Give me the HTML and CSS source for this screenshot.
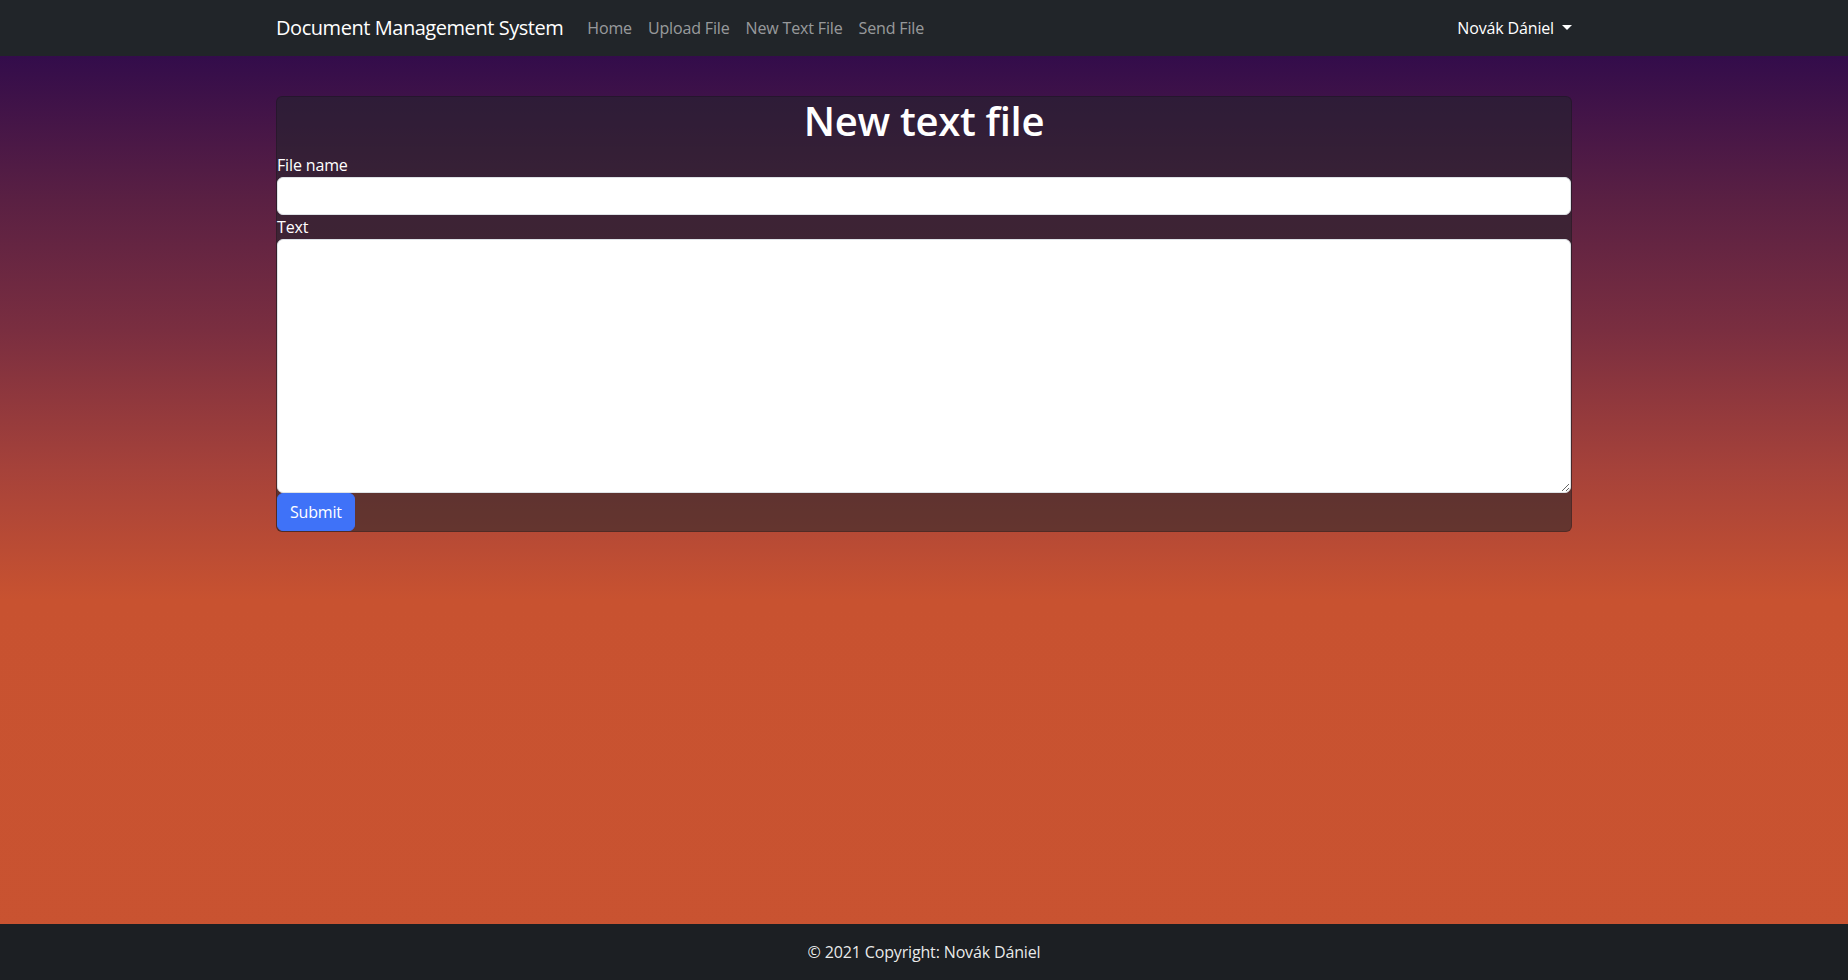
FILE: index.html
```html
<!DOCTYPE html>
<html lang="en">
<head>
<meta charset="utf-8">
<title>New text file - Document Management System</title>
<link rel="stylesheet" href="styles.css">
</head>
<body>
<nav class="navbar">
  <div class="container nav-inner">
    <a class="brand" href="#">Document Management System</a>
    <ul class="nav-links">
      <li><a class="nav-link" href="#">Home</a></li>
      <li><a class="nav-link" href="#">Upload File</a></li>
      <li><a class="nav-link" href="#">New Text File</a></li>
      <li><a class="nav-link" href="#">Send File</a></li>
    </ul>
    <a class="user-link" href="#">Novák Dániel<span class="caret"></span></a>
  </div>
</nav>
<main class="main">
  <div class="container">
    <form class="card">
      <h1 class="title">New text file</h1>
      <label class="label" for="fname">File name</label>
      <input class="control" id="fname" type="text">
      <label class="label" for="ftext">Text</label>
      <textarea class="control area" id="ftext" rows="10"></textarea>
      <div class="actions"><button class="btn" type="button">Submit</button></div>
    </form>
  </div>
</main>
<footer class="footer">© 2021 Copyright: Novák Dániel</footer>
</body>
</html>
```
FILE: styles.css
```css
* { box-sizing: border-box; }
html, body { height: 100%; }
body {
  margin: 0;
  min-height: 100vh;
  display: flex;
  flex-direction: column;
  font-family: "Open Sans", "Noto Sans", sans-serif;
  font-size: 16px;
  line-height: 1.5;
  letter-spacing: -0.15px;
  color: #fff;
  background: #c95331 linear-gradient(180deg, #330c4b 56px, #5a2043 200px, #7a2e40 330px, #a6423a 470px, #c85230 600px, #c95331 100%) no-repeat;
}
.container {
  width: 1296px;
  margin: 0 auto;
}
.navbar {
  background: #212529;
  height: 56px;
  flex: none;
}
.nav-inner {
  display: flex;
  align-items: center;
  height: 56px;
}
.brand {
  font-size: 20px;
  line-height: 30px;
  letter-spacing: -0.45px;
  color: #fff;
  text-decoration: none;
  margin-right: 16px;
}
.nav-links {
  list-style: none;
  margin: 0;
  padding: 0;
  display: flex;
  flex: 1;
}
.nav-link {
  display: block;
  padding: 8px 8px;
  color: rgba(255,255,255,.55);
  text-decoration: none;
}
.user-link {
  color: #fff;
  text-decoration: none;
  padding: 8px 0;
}
.caret {
  display: inline-block;
  margin-left: 8px;
  vertical-align: 4px;
  border-top: 5px solid #fff;
  border-left: 5px solid transparent;
  border-right: 5px solid transparent;
}
.main {
  flex: 1;
  padding-top: 40px;
}
.card {
  display: flex;
  flex-direction: column;
  background: rgba(33,37,41,.55);
  border: 1px solid rgba(0,0,0,.18);
  border-radius: 6px;
}
.title {
  margin: 0 0 8px;
  font-size: 40px;
  font-weight: 600;
  line-height: 48px;
  letter-spacing: -0.3px;
  text-align: center;
}
.label {
  display: block;
  line-height: 24px;
}
.control {
  display: block;
  width: 100%;
  height: 38px;
  padding: 6px 12px;
  font: inherit;
  color: #212529;
  background: #fff;
  border: 1px solid #dee2e6;
  border-radius: 6px;
}
.area {
  height: 254px;
  resize: vertical;
}
.actions { display: flex; }
.btn {
  height: 38px;
  padding: 6px 12px;
  font: inherit;
  letter-spacing: -0.2px;
  color: #fff;
  background: #3f72f8;
  border: 1px solid #3f72f8;
  border-radius: 6px;
}
.footer {
  flex: none;
  background: #1c1f23;
  text-align: center;
  padding: 16px;
  line-height: 24px;
  color: rgba(255,255,255,.92);
}
```
